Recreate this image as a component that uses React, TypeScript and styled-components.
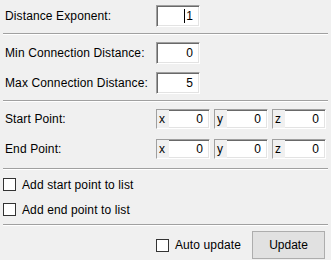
import React from "react";
import styled, { createGlobalStyle } from "styled-components";

const Global = createGlobalStyle`
  html, body { margin: 0; padding: 0; background: #f0f0f0; }
  body { font-family: "Liberation Sans", Arial, sans-serif; font-size: 12px; letter-spacing: 0.12px; color: #000; }
`;

const Panel = styled.div`
  width: 331px;
  height: 260px;
  box-sizing: border-box;
  padding: 5px 3px 0 3px;
  display: flex;
  flex-direction: column;
  background: #f0f0f0;
`;

const Row = styled.div<{ $mt?: number; $h: number }>`
  display: flex;
  align-items: center;
  height: ${(p) => p.$h}px;
  margin-top: ${(p) => p.$mt ?? 0}px;
`;

const Label = styled.div`
  width: 153px;
  padding-left: 2px;
  box-sizing: border-box;
  white-space: nowrap;
`;

const Separator = styled.div<{ $mt: number }>`
  height: 1px;
  margin-top: ${(p) => p.$mt}px;
  background: #a0a0a0;
  border-bottom: 1px solid #ffffff;
`;

const NumberBox = styled.div<{ $w: number }>`
  width: ${(p) => p.$w}px;
  height: 100%;
  box-sizing: border-box;
  background: #fff;
  border-style: solid;
  border-width: 1px;
  border-color: #a0a0a0 #fff #fff #a0a0a0;
  box-shadow: inset 1px 1px 0 #696969, inset -1px -1px 0 #e3e3e3;
  display: flex;
  align-items: center;
  justify-content: flex-end;
  padding-right: 6px;
`;

const Caret = styled.span`
  display: inline-block;
  width: 1px;
  height: 14px;
  background: #000;
  margin-right: 1px;
`;

const Vectors = styled.div`
  display: flex;
  gap: 4px;
  height: 100%;
`;

const Axis = styled.div`
  width: 54px;
  height: 100%;
  box-sizing: border-box;
  background: #fff;
  border-style: solid;
  border-width: 1px;
  border-color: #a0a0a0 #fff #fff #a0a0a0;
  box-shadow: inset 1px 1px 0 #696969, inset -1px -1px 0 #e3e3e3;
  display: flex;
  align-items: center;
`;

const AxisTag = styled.div`
  width: 10px;
  height: 100%;
  background: #f0f0f0;
  padding-left: 2px;
  box-sizing: content-box;
  display: flex;
  align-items: center;
`;

const AxisValue = styled.div`
  flex: 1;
  text-align: right;
  padding-right: 6px;
`;

const CheckRow = styled.label<{ $mt: number }>`
  display: flex;
  align-items: center;
  gap: 6px;
  height: 13px;
  margin-top: ${(p) => p.$mt}px;
`;

const Box = styled.span`
  display: inline-block;
  width: 13px;
  height: 13px;
  box-sizing: border-box;
  border: 1px solid #333;
  background: #fff;
`;

const Footer = styled.div`
  display: flex;
  align-items: center;
  justify-content: flex-end;
  height: 28px;
  margin-top: 5px;
  padding-right: 3px;
`;

const FooterCheck = styled.label`
  display: flex;
  align-items: center;
  gap: 6px;
  margin-right: 11px;
`;

const Button = styled.button`
  width: 73px;
  height: 28px;
  background: #e1e1e1;
  border: 1px solid #adadad;
  font: inherit;
  color: #000;
  padding: 0;
`;

export default function App() {
  return (
    <>
      <Global />
      <Panel>
        <Row $h={22}>
          <Label>Distance Exponent:</Label>
          <NumberBox $w={44}>
            <Caret />1
          </NumberBox>
        </Row>
        <Separator $mt={6} />
        <Row $h={22} $mt={7}>
          <Label>Min Connection Distance:</Label>
          <NumberBox $w={44}>0</NumberBox>
        </Row>
        <Row $h={22} $mt={8}>
          <Label>Max Connection Distance:</Label>
          <NumberBox $w={44}>5</NumberBox>
        </Row>
        <Separator $mt={6} />
        <Row $h={20} $mt={7}>
          <Label>Start Point:</Label>
          <Vectors>
            {["x", "y", "z"].map((a) => (
              <Axis key={a}>
                <AxisTag>{a}</AxisTag>
                <AxisValue>0</AxisValue>
              </Axis>
            ))}
          </Vectors>
        </Row>
        <Row $h={20} $mt={10}>
          <Label>End Point:</Label>
          <Vectors>
            {["x", "y", "z"].map((a) => (
              <Axis key={a}>
                <AxisTag>{a}</AxisTag>
                <AxisValue>0</AxisValue>
              </Axis>
            ))}
          </Vectors>
        </Row>
        <Separator $mt={9} />
        <CheckRow $mt={8}>
          <Box />
          Add start point to list
        </CheckRow>
        <CheckRow $mt={12}>
          <Box />
          Add end point to list
        </CheckRow>
        <Separator $mt={8} />
        <Footer>
          <FooterCheck>
            <Box />
            Auto update
          </FooterCheck>
          <Button>Update</Button>
        </Footer>
      </Panel>
    </>
  );
}
